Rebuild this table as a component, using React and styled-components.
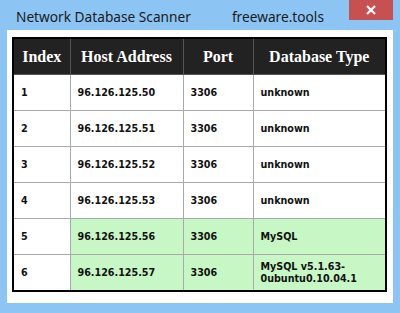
import styled, { createGlobalStyle } from 'styled-components'

const Global = createGlobalStyle`
    html, body { margin: 0; padding: 0; }
    body { background: #8cc4f4; }
`

const Frame = styled.div`
    width: 400px;
    height: 313px;
    box-sizing: border-box;
    background: #8cc4f4;
    padding: 0 7px 10px 7px;
    display: flex;
    flex-direction: column;
`

const TitleBar = styled.div`
    height: 30px;
    display: flex;
    align-items: flex-start;
    font-family: "Noto Sans", "Open Sans", sans-serif;
    font-size: 13.7px;
    color: #1b1b1b;
`

const Caption = styled.span`
    margin-top: 7px;
    margin-left: ${p => p.$left}px;
    white-space: nowrap;
    flex-shrink: 0;
`

const Close = styled.div`
    margin-left: auto;
    width: 44px;
    height: 20px;
    background: #c75050;
    color: #fff;
    display: flex;
    align-items: center;
    justify-content: center;
    flex-shrink: 0;
`

const Client = styled.div`
    flex: 1;
    background: #fff;
    padding: 7px 6px 0 5px;
`

const Table = styled.table`
    width: 375px;
    border-collapse: collapse;
    table-layout: fixed;
    border: 2px solid #000;
`

const Head = styled.th`
    background: #222;
    color: #fff;
    font-family: "Liberation Serif", serif;
    font-weight: bold;
    font-size: 16px;
    height: 35px;
    padding: 0;
    border: 1px solid #555;
    text-align: center;
`

const Cell = styled.td`
    background: ${p => p.$green ? '#c7f7c5' : '#fff'};
    font-family: "DejaVu Sans", Verdana, sans-serif;
    font-weight: bold;
    font-size: 9.6px;
    color: #111;
    height: 35px;
    padding: 0 0 0 7px;
    border: 1px solid #aaa;
    line-height: 12px;
    white-space: pre-line;
`

const rows = [
    ['1', '96.126.125.50', '3306', 'unknown'],
    ['2', '96.126.125.51', '3306', 'unknown'],
    ['3', '96.126.125.52', '3306', 'unknown'],
    ['4', '96.126.125.53', '3306', 'unknown'],
    ['5', '96.126.125.56', '3306', 'MySQL', true],
    ['6', '96.126.125.57', '3306', 'MySQL v5.1.63-\n0ubuntu0.10.04.1', true],
]

export default function App(){
    return(
        <Frame>
            <Global />
            <TitleBar>
                <Caption $left={9}>Network Database Scanner</Caption>
                <Caption $left={41}>freeware.tools</Caption>
                <Close>
                    <svg width="10" height="10" viewBox="0 0 10 10">
                        <path d="M1 1 L9 9 M9 1 L1 9" stroke="#fff" strokeWidth="2.2" />
                    </svg>
                </Close>
            </TitleBar>
            <Client>
                <Table>
                    <colgroup>
                        <col style={{width: 57}} />
                        <col style={{width: 113}} />
                        <col style={{width: 70}} />
                        <col />
                    </colgroup>
                    <thead>
                        <tr>
                            <Head>Index</Head>
                            <Head>Host Address</Head>
                            <Head>Port</Head>
                            <Head>Database Type</Head>
                        </tr>
                    </thead>
                    <tbody>
                        {rows.map(r => (
                            <tr key={r[0]}>
                                <Cell>{r[0]}</Cell>
                                <Cell $green={r[4]}>{r[1]}</Cell>
                                <Cell $green={r[4]}>{r[2]}</Cell>
                                <Cell $green={r[4]}>{r[3]}</Cell>
                            </tr>
                        ))}
                    </tbody>
                </Table>
            </Client>
        </Frame>
    )
}
